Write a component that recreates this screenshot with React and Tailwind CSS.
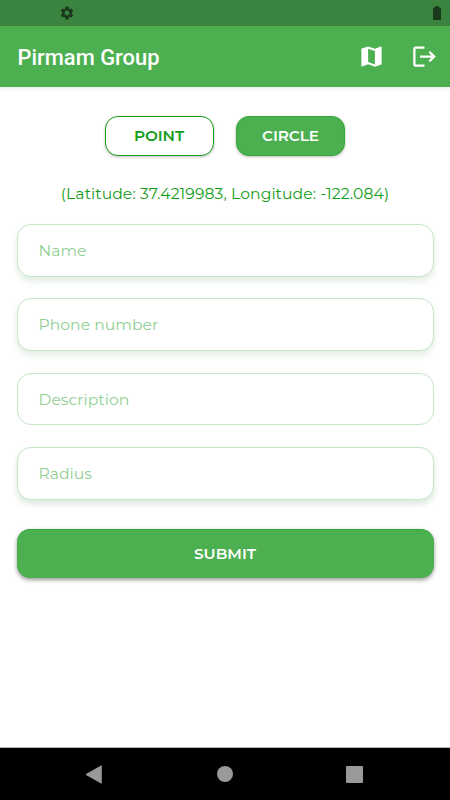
import { useState } from 'react'
import { MdLogout, MdMap, MdSettings } from 'react-icons/md'

const fields = [
  { name: 'name', label: 'Name', style: 'shadow-[0_4px_6px_rgba(76,140,80,0.16)]' },
  { name: 'phone', label: 'Phone number', style: 'shadow-[0_4px_6px_rgba(76,140,80,0.16)]' },
  { name: 'description', label: 'Description', style: 'pt-px' },
  { name: 'radius', label: 'Radius', style: 'shadow-[0_4px_6px_rgba(76,140,80,0.2)]' },
]

function StatusBar() {
  return (
    <div className="h-[26px] shrink-0 bg-[#3b843f] flex items-center justify-between pl-[59px] pr-[9px] text-[#1a381c]">
      <MdSettings className="size-4" />
      <svg className="w-2 h-[14px]" viewBox="0 0 8 14" fill="currentColor">
        <path d="M2.3 0h3.4v1.4H7.2q.8 0 .8.8v11q0 .8-.8.8H.8q-.8 0-.8-.8v-11q0-.8.8-.8h1.5z" />
      </svg>
    </div>
  )
}

function NavBar() {
  return (
    <div className="h-[53px] shrink-0 border-t border-[#b5b5b5] bg-black flex items-center justify-between pl-[85px] pr-[87px]">
      <svg className="w-[17px] h-[19px]" viewBox="0 0 17 19" fill="#999">
        <path d="M16.8 1v17q0 .8-.7.4L1 9.9q-.6-.4 0-.8L16.1.6q.7-.4.7.4z" />
      </svg>
      <div className="size-4 rounded-full bg-[#999] ml-px" />
      <div className="size-[17px] rounded-[1px] bg-[#999]" />
    </div>
  )
}

export default function App() {
  const [shape, setShape] = useState('circle')

  const getShapeStyle = (value) =>
    shape === value ? 'bg-[#4caf50] text-white' : 'bg-white text-[#119d17]'

  return (
    <div className="w-[450px] h-[800px] flex flex-col bg-white overflow-hidden font-[Montserrat,Inter,sans-serif]">
      <StatusBar />

      {/* App bar */}
      <header className="h-[61px] shrink-0 bg-[#4caf50] flex items-center pl-[17.5px] pr-[12.5px] text-white shadow-[0_2px_4px_rgba(0,0,0,0.08)]">
        <h1 className="flex-1 pt-[3px] font-[Roboto,sans-serif] font-medium text-[21.9px]">Pirmam Group</h1>
        <button type="button" aria-label="Map">
          <MdMap className="size-[27px]" />
        </button>
        <button type="button" aria-label="Log out" className="ml-[25.5px]">
          <MdLogout className="size-[27px]" />
        </button>
      </header>

      <main className="flex-1 flex flex-col px-[16.5px] pt-[29px]">
        {/* Shape toggle */}
        <div className="flex justify-center gap-[21.5px]">
          <button
            type="button"
            onClick={() => setShape('point')}
            className={`w-[109.5px] h-[39.5px] rounded-[13px] border border-[#16a01c] pt-px pr-px text-[15.3px] font-semibold tracking-[-0.05px] shadow-[0_1px_3px_rgba(0,0,0,0.26)] ${getShapeStyle('point')}`}
          >
            POINT
          </button>
          <button
            type="button"
            onClick={() => setShape('circle')}
            className={`w-[109.5px] h-[39.5px] rounded-[13px] border border-[#2fa834] pt-px text-[15.3px] font-semibold tracking-[-0.1px] shadow-[0_1px_3px_rgba(0,0,0,0.26)] ${getShapeStyle('circle')}`}
          >
            CIRCLE
          </button>
        </div>

        <p className="mt-[27.5px] h-[22px] text-center text-[15.6px] leading-[22px] tracking-[0.09px] whitespace-nowrap text-[#119d17]">
          (Latitude: 37.4219983, Longitude: -122.084)
        </p>

        {/* Form */}
        <form className="mt-[19px] flex flex-col" onSubmit={(e) => e.preventDefault()}>
          <div className="flex flex-col gap-[21.6px]">
            {fields.map((field) => (
              <input
                key={field.name}
                name={field.name}
                placeholder={field.label}
                className={`h-[52.7px] w-full rounded-[14px] border border-[#c5e6c7] bg-white px-[21px] text-[15.6px] tracking-[0.03px] text-[#4caf50] outline-none placeholder:text-[#8fce92] ${field.style}`}
              />
            ))}
          </div>
          <button
            type="submit"
            className="mt-[29px] h-[49px] rounded-[13px] border-t border-[#2fa834] bg-[#4caf50] pt-px text-[15.3px] font-semibold text-white shadow-[0_2px_4px_rgba(0,0,0,0.4)]"
          >
            SUBMIT
          </button>
        </form>
      </main>

      <NavBar />
    </div>
  )
}
